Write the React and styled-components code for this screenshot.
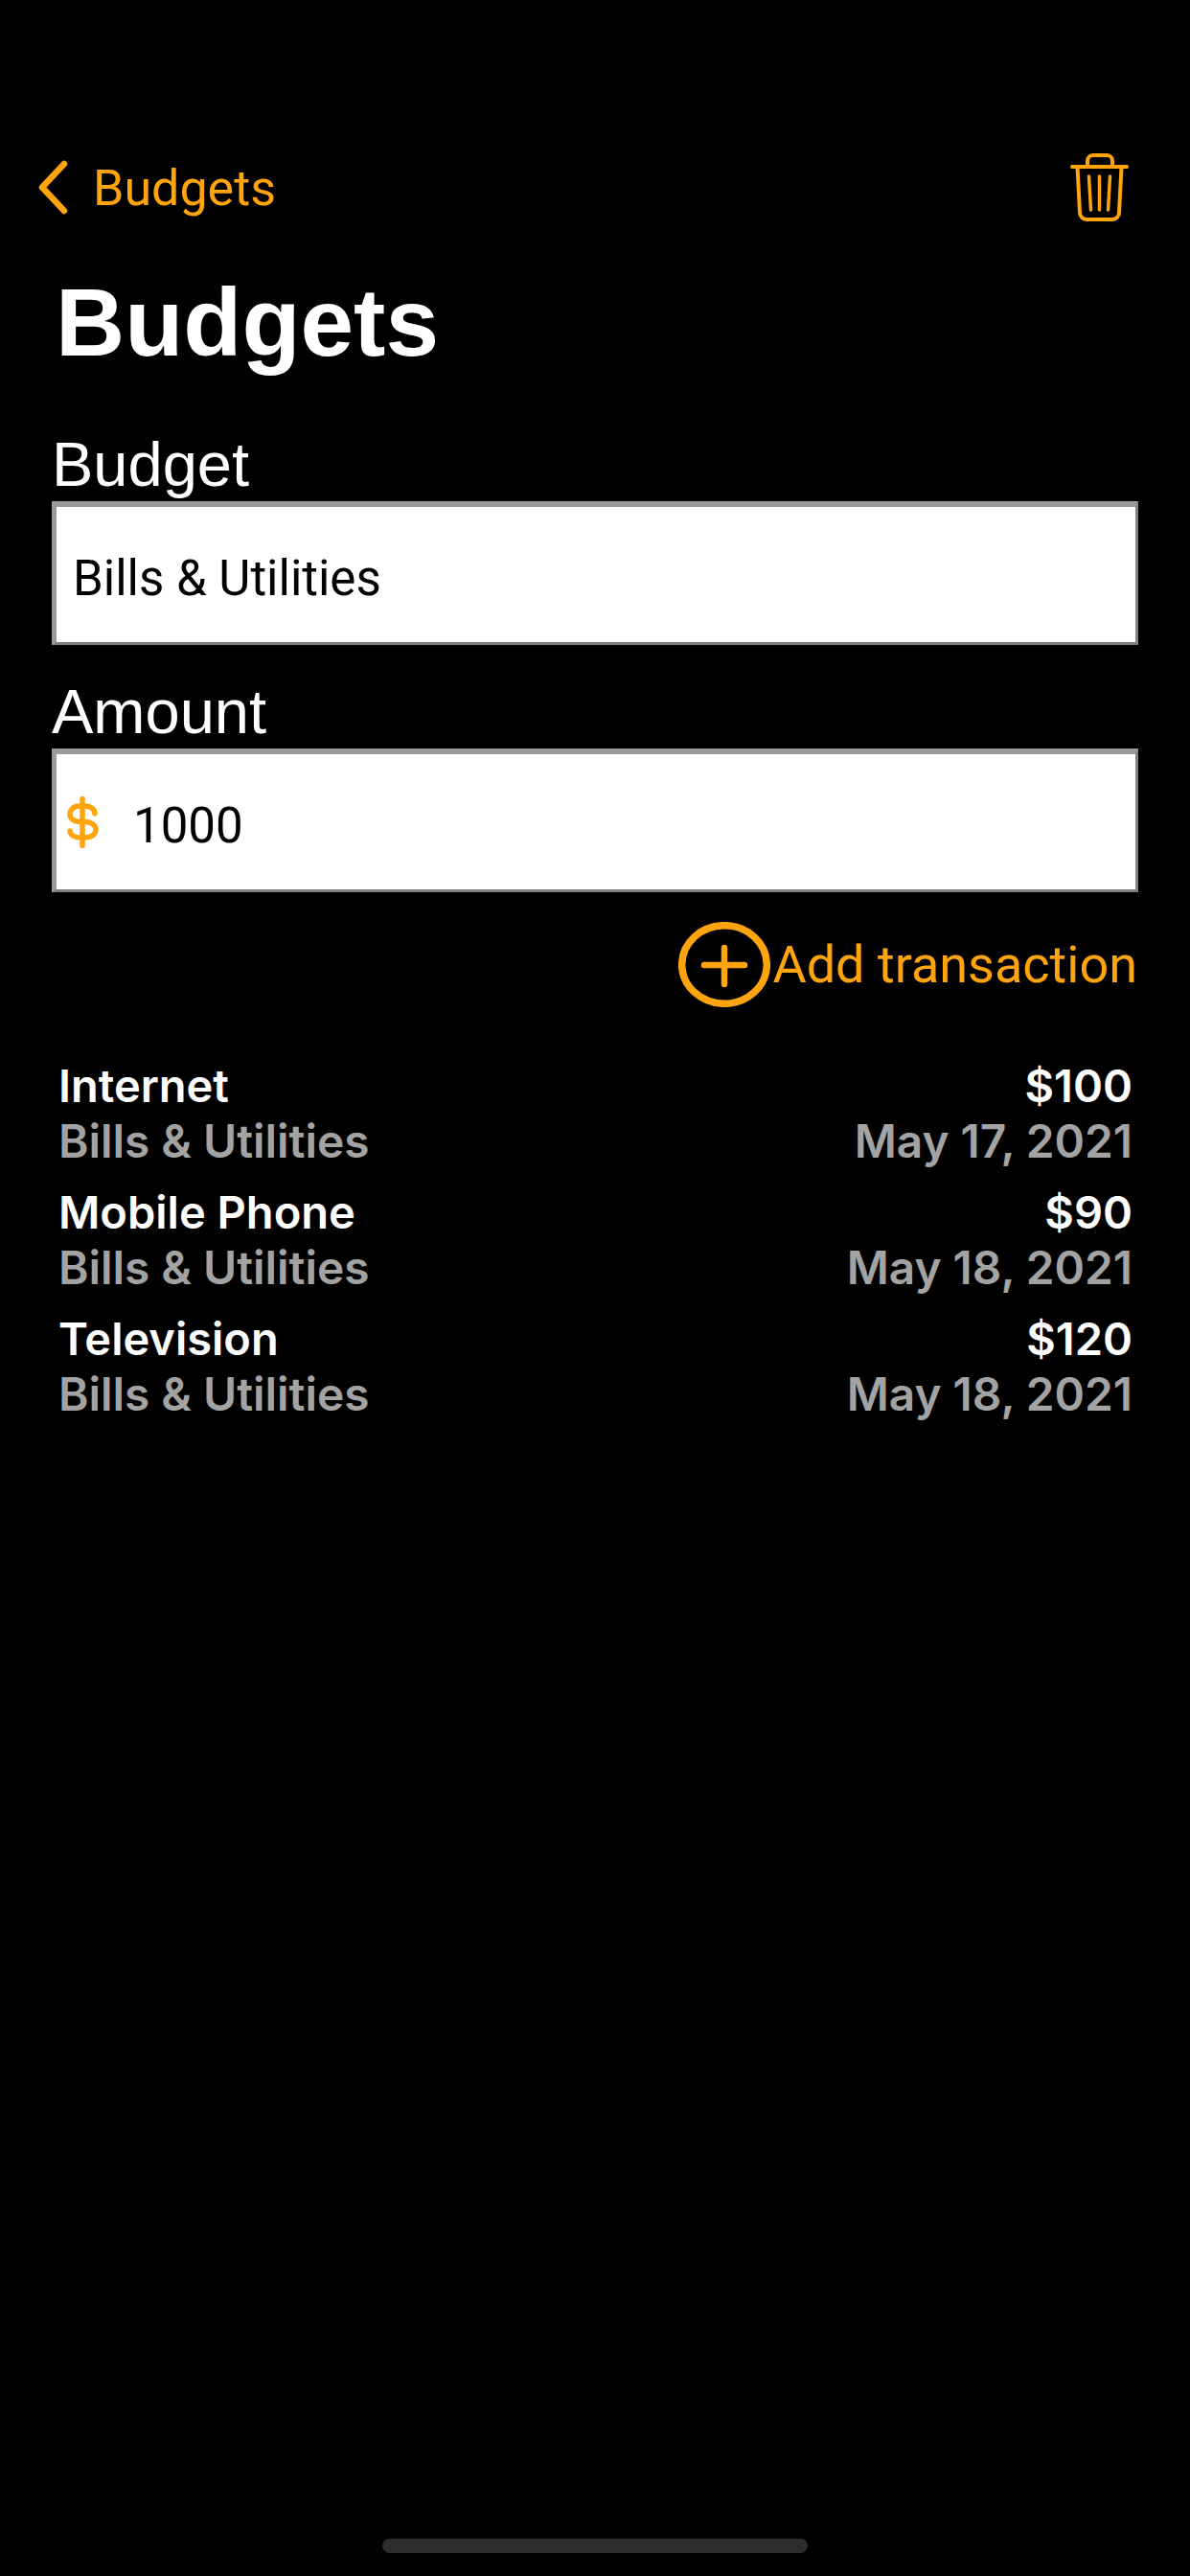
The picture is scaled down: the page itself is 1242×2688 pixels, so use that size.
import React from "react";
import styled, { createGlobalStyle } from "styled-components";

const orange = "#ffa40c";

const GlobalStyle = createGlobalStyle`
  html, body {
    margin: 0;
    background: #000;
  }
`;

const Page = styled.div`
  width: 1242px;
  height: 2688px;
  background: #000;
  display: flex;
  flex-direction: column;
  padding-top: 160px;
  box-sizing: border-box;
  overflow: hidden;
  font-family: Inter, "Liberation Sans", sans-serif;
`;

const Nav = styled.div`
  display: flex;
  align-items: center;
  justify-content: space-between;
  height: 71px;
  padding: 0 64px 0 40px;
`;

const BackLink = styled.div`
  display: flex;
  align-items: center;
  gap: 26px;
  color: ${orange};
  font-family: Roboto, sans-serif;
  font-size: 52px;
  line-height: 60px;
`;

const BackText = styled.span`
  margin-top: 3px;
`;

const Title = styled.h1`
  margin: 55px 0 0;
  padding-left: 58px;
  color: #fff;
  font-family: "Liberation Sans", sans-serif;
  font-size: 100px;
  line-height: 100px;
  font-weight: 700;
`;

const Form = styled.div`
  display: flex;
  flex-direction: column;
  padding: 68px 54px 0;
`;

const Label = styled.label`
  display: block;
  color: #fff;
  font-family: "Liberation Sans", sans-serif;
  font-size: 65px;
  line-height: 62px;
  margin-bottom: 7px;
`;

const Field = styled.div`
  display: flex;
  align-items: center;
  height: 150px;
  box-sizing: border-box;
  margin-bottom: 39px;
  padding-left: ${(p) => p.$inset}px;
  gap: 36px;
  background: #fff;
  border-style: solid;
  border-width: 6px 3px 3px 5px;
  border-color: #9a9a9a #808080 #808080 #9a9a9a;
  color: #000;
  font-family: Roboto, sans-serif;
  font-size: 51px;
`;

const FieldText = styled.span`
  margin-top: 7px;
`;

const AddRow = styled.div`
  display: flex;
  justify-content: flex-end;
  align-items: center;
  gap: 2px;
  margin-top: -8px;
  padding-right: 55px;
  color: ${orange};
  font-family: Roboto, sans-serif;
  font-size: 54px;
  line-height: 89px;
`;

const List = styled.div`
  display: flex;
  flex-direction: column;
  padding: 53px 60px 0 61px;
`;

const Row = styled.div`
  display: flex;
  justify-content: space-between;
  height: 132px;
`;

const Column = styled.div`
  display: flex;
  flex-direction: column;
  align-items: ${(p) => (p.$right ? "flex-end" : "flex-start")};
`;

const Name = styled.div`
  color: #fff;
  font-size: 47px;
  line-height: 58px;
  font-weight: 600;
`;

const Sub = styled.div`
  color: #a3a3a3;
  font-size: 47.8px;
  line-height: 58px;
  font-weight: 600;
`;

const HomeBar = styled.div`
  width: 444px;
  height: 15px;
  margin: auto auto 24px;
  border-radius: 8px;
  background: #2d2d2d;
`;

const Chevron = () => (
  <svg width="31" height="57" viewBox="0 0 31 57" fill="none">
    <path d="M27 4 L4 28.5 L27 53" stroke={orange} strokeWidth="6.5" strokeLinecap="round" strokeLinejoin="round" />
  </svg>
);

const Trash = () => (
  <svg width="61" height="71" viewBox="0 0 61 71" fill="none" stroke={orange} strokeLinecap="round" strokeLinejoin="round">
    <path d="M2 14H59" strokeWidth="4" />
    <path d="M18 14V8a6 6 0 0 1 6-6H38a6 6 0 0 1 6 6V14" strokeWidth="4" />
    <path d="M7.5 14L10 62a7 7 0 0 0 7 7H44a7 7 0 0 0 7-7L53.5 14" strokeWidth="4" />
    <path d="M19.5 24L21.5 59M30.5 24V59M41.5 24L39.5 59" strokeWidth="3.5" />
  </svg>
);

const Dollar = () => (
  <svg width="33" height="54" viewBox="0 0 33 54" fill="none" stroke={orange} strokeWidth="5.500" strokeLinecap="round" strokeLinejoin="round">
    <path d="M16 2.500V51.500" />
    <path d="M29 18C29 13 24 10 19 10H13C7 10 3 14 3 18.500C3 23 7 26.500 13 26.500H19C25 26.500 30 30 30 35C30 39.500 25 43 19 43H13C8 43 3 40 3 36" />
  </svg>
);

const AddIcon = () => (
  <svg width="96" height="89" viewBox="0 0 96 89" fill="none" stroke={orange} strokeLinecap="round">
    <ellipse cx="48" cy="44.500" rx="44.300" ry="40.800" strokeWidth="7.500" />
    <path d="M27 45H69M48 27V65" strokeWidth="6.500" />
  </svg>
);

const transactions = [
  { name: "Internet", amount: "$100", date: "May 17, 2021" },
  { name: "Mobile Phone", amount: "$90", date: "May 18, 2021" },
  { name: "Television", amount: "$120", date: "May 18, 2021" },
];

const App = () => (
  <Page>
    <GlobalStyle />
    <Nav>
      <BackLink>
        <Chevron />
        <BackText>Budgets</BackText>
      </BackLink>
      <Trash />
    </Nav>
    <Title>Budgets</Title>
    <Form>
      <Label>Budget</Label>
      <Field $inset={17}>
        <FieldText>Bills &amp; Utilities</FieldText>
      </Field>
      <Label>Amount</Label>
      <Field $inset={11}>
        <Dollar />
        <FieldText>1000</FieldText>
      </Field>
    </Form>
    <AddRow>
      <AddIcon />
      Add transaction
    </AddRow>
    <List>
      {transactions.map((t) => (
        <Row key={t.name}>
          <Column>
            <Name>{t.name}</Name>
            <Sub>Bills &amp; Utilities</Sub>
          </Column>
          <Column $right>
            <Name>{t.amount}</Name>
            <Sub>{t.date}</Sub>
          </Column>
        </Row>
      ))}
    </List>
    <HomeBar />
  </Page>
);

export default App;
